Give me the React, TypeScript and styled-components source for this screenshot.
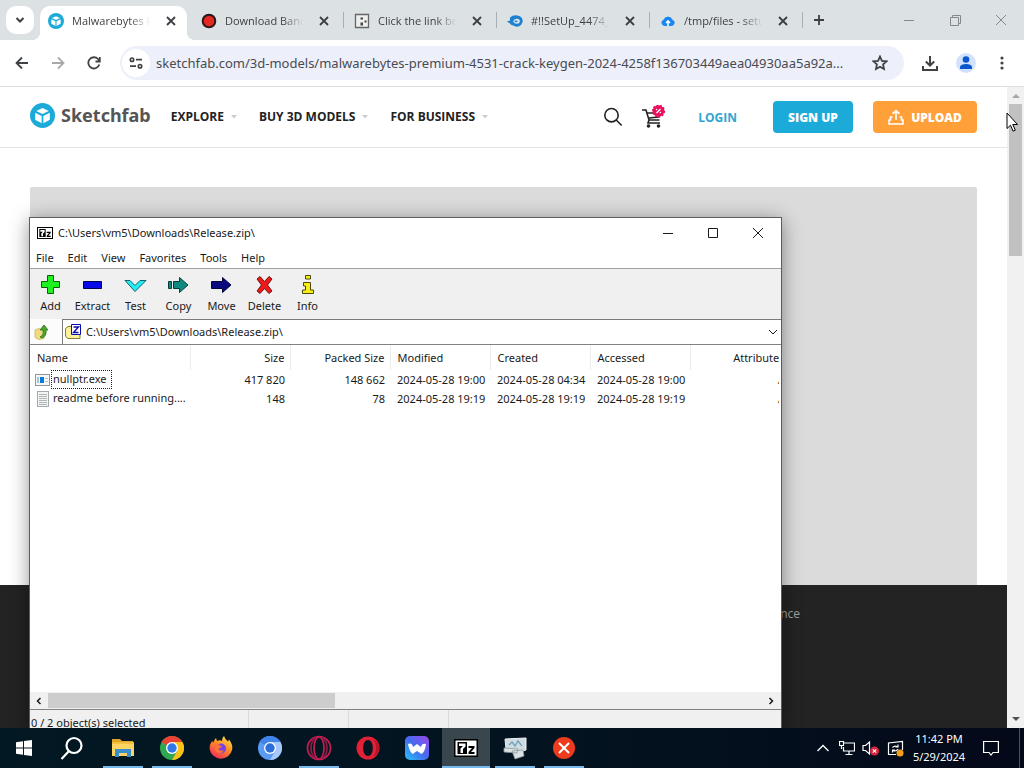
import React from "react";
import styled, { createGlobalStyle, css } from "styled-components";

const Global = createGlobalStyle`
  * { box-sizing: border-box; }
  body { margin: 0; font-family: "Open Sans", "Noto Sans", sans-serif; }
  button { border: 0; padding: 0; margin: 0; background: none; font: inherit; color: inherit; }
  a { color: inherit; text-decoration: none; }
  svg { display: block; flex: none; }
`;

const Desktop = styled.div`
  position: relative;
  display: flex;
  flex-direction: column;
  height: 100vh;
  overflow: hidden;
  background: #fff;
`;

/* ---------- browser ---------- */

const Browser = styled.div`
  flex: 1;
  min-height: 0;
  display: flex;
  flex-direction: column;
`;

const TabStrip = styled.div`
  display: flex;
  align-items: center;
  height: 40px;
  padding-left: 6px;
  background: #dce1e3;
  color: #3c3f42;
`;

const IconButton = styled.button<{ $w?: number; $h?: number; $muted?: boolean }>`
  display: flex;
  align-items: center;
  justify-content: center;
  flex: none;
  width: ${(p) => p.$w ?? 28}px;
  height: ${(p) => p.$h ?? 28}px;
  opacity: ${(p) => (p.$muted ? 0.45 : 1)};
`;

const TabSearch = styled(IconButton)`
  margin-right: 6px;
  border-radius: 10px;
  background: #fff;
`;

const Tab = styled.div<{ $active?: boolean }>`
  position: relative;
  display: flex;
  align-items: center;
  align-self: flex-end;
  flex: none;
  width: 147px;
  height: 34px;
  margin-right: 6px;
  padding: 0 6px 5px 8px;
  border-radius: 10px 10px 0 0;
  ${(p) =>
    p.$active
      ? css`
          background: #fff;
          &::before, &::after {
            content: "";
            position: absolute;
            bottom: 0;
            width: 8px;
            height: 8px;
          }
          &::before { left: -8px; background: radial-gradient(circle at 0 0, transparent 8px, #fff 8px); }
          &::after { right: -8px; background: radial-gradient(circle at 100% 0, transparent 8px, #fff 8px); }
        `
      : css`
          &::after {
            content: "";
            position: absolute;
            right: -4px;
            top: 6px;
            width: 1px;
            height: 16px;
            background: #a9b0b5;
          }
        `}
`;

const TabTitle = styled.span`
  flex: 1;
  min-width: 0;
  margin: 0 9px 0 8px;
  overflow: hidden;
  white-space: nowrap;
  font-size: 11px;
  line-height: 18px;
  mask-image: linear-gradient(to right, #000 72%, transparent 98%);
`;

const CaptionButtons = styled.div`
  display: flex;
  margin-left: auto;
  color: #85898c;
`;

const Toolbar = styled.div`
  display: flex;
  align-items: center;
  height: 47px;
  padding: 0 8px;
  gap: 8px;
  border-bottom: 1px solid #dcdfe1;
  background: #fff;
  color: #3f4346;
`;

const AddressBar = styled.label`
  display: flex;
  align-items: center;
  flex: 1;
  min-width: 0;
  height: 34px;
  margin: 0 -4px 0 4px;
  padding: 0 10px 0 2px;
  border-radius: 17px;
  background: #edf0fa;
`;

const SiteInfo = styled(IconButton)`
  border-radius: 50%;
  background: #fff;
`;

const UrlInput = styled.input`
  flex: 1;
  min-width: 0;
  margin-left: 6px;
  padding: 0;
  border: 0;
  outline: 0;
  background: none;
  color: #474b52;
  font: 13px/20px "Noto Sans", sans-serif;
  text-overflow: ellipsis;
`;

const ToolbarActions = styled.div`
  display: flex;
  margin: 0 -4px 0 4px;
`;

const Viewport = styled.div`
  flex: 1;
  min-height: 0;
  display: flex;
`;

const Page = styled.div`
  flex: 1;
  min-width: 0;
  display: flex;
  flex-direction: column;
  background: #fff;
`;

const SiteHeader = styled.header`
  display: flex;
  align-items: center;
  height: 61px;
  padding: 0 30px;
  border-bottom: 1px solid #e4e5e8;
`;

const Brand = styled.a`
  display: flex;
  align-items: center;
  gap: 6px;
  margin-right: 20px;
  padding-bottom: 4px;
  color: #555;
  font-family: "Noto Sans", sans-serif;
  font-size: 18px;
  font-weight: 700;
  line-height: 26px;
`;

const SiteNav = styled.nav`
  display: flex;
  gap: 22px;
`;

const NavItem = styled.a`
  display: flex;
  align-items: center;
  gap: 7px;
  color: #222;
  font-size: 12px;
  font-weight: 700;
  line-height: 18px;
`;

const HeaderActions = styled.div`
  display: flex;
  align-items: center;
  margin-left: auto;
  color: #222;
`;

const LoginLink = styled.a`
  margin: 0 16px 0 25px;
  color: #2ea6d0;
  font-size: 12px;
  font-weight: 700;
`;

const SiteButton = styled.button<{ $color: string; $w: number }>`
  display: flex;
  align-items: center;
  justify-content: center;
  gap: 7px;
  width: ${(p) => p.$w}px;
  height: 32px;
  margin-left: 20px;
  border-radius: 4px;
  background: ${(p) => p.$color};
  color: #fff;
  font-size: 12px;
  font-weight: 800;
`;

const Hero = styled.main`
  flex: 1;
  min-height: 0;
  padding: 39px 30px 0;
`;

const ModelViewer = styled.div`
  height: 100%;
  border-radius: 2px 2px 0 0;
  background: #dbdbdb;
`;

const SiteFooter = styled.footer`
  display: flex;
  justify-content: flex-end;
  height: 143px;
  padding: 20px 207px;
  background: #232323;
  color: #a2a2a2;
  font-size: 12px;
  line-height: 18px;
`;

const PageScrollbar = styled.div`
  display: flex;
  flex-direction: column;
  align-items: center;
  width: 17px;
  background: #f1f1f1;
`;

const ScrollThumb = styled.div`
  width: 13px;
  height: 152px;
  margin-bottom: auto;
  background: #c1c1c1;
`;

/* ---------- archive manager window ---------- */

const AppWindow = styled.section`
  position: absolute;
  left: 29px;
  top: 217px;
  display: flex;
  flex-direction: column;
  width: 753px;
  height: 517px;
  border: 1px solid #5c5c5c;
  background: #fff;
  color: #1a1a1a;
  font-family: "Noto Sans", sans-serif;
  font-size: 11px;
  line-height: 16px;
  box-shadow: 0 3px 18px rgba(0, 0, 0, 0.42);
`;

const TitleBar = styled.div`
  display: flex;
  align-items: center;
  height: 30px;
  padding-left: 7px;
`;

const WindowTitle = styled.span`
  margin: 0 auto 0 5px;
`;

const MenuBar = styled.div`
  display: flex;
  gap: 14px;
  height: 21px;
  padding: 2px 6px 0;
  border-bottom: 1px solid #a0a0a0;
`;

const MenuItem = styled.button`
  height: 16px;
  line-height: 16px;
`;

const ToolRow = styled.div`
  display: flex;
  height: 50px;
  background: #f0f0f0;
`;

const Tool = styled.button`
  display: flex;
  flex-direction: column;
  align-items: center;
  gap: 2px;
  width: 43px;
  padding-top: 5px;
  white-space: nowrap;
  &:first-child { width: 41px; }
`;

const PathRow = styled.div`
  display: flex;
  height: 26px;
  gap: 8px;
  background: #fcfcfc;
  border-bottom: 1px solid #828282;
`;

const PathBox = styled.label`
  display: flex;
  align-items: center;
  flex: 1;
  gap: 4px;
  padding: 0 2px;
  border: 1px solid #7a7a7a;
  border-width: 1px 0 0 1px;
  background: #fff;
`;

const PathInput = styled.input`
  flex: 1;
  padding: 0;
  border: 0;
  outline: 0;
  background: none;
  color: #1a1a1a;
  font: 11px/16px "Noto Sans", sans-serif;
`;

const ListArea = styled.div`
  flex: 1;
  min-height: 0;
  margin-right: 2px;
  overflow: hidden;
`;

const FileTable = styled.table`
  width: 760px;
  table-layout: fixed;
  border-collapse: collapse;
`;

const Col = styled.col<{ $w: number }>`
  width: ${(p) => p.$w}px;
`;

const Head = styled.th<{ $right?: boolean }>`
  height: 25px;
  padding: 0 5px 0 7px;
  border-right: 1px solid #ececec;
  font-weight: 400;
  text-align: ${(p) => (p.$right ? "right" : "left")};
`;

const Cell = styled.td<{ $right?: boolean }>`
  height: 19px;
  padding: 0 5px 0 7px;
  overflow: hidden;
  white-space: nowrap;
  text-align: ${(p) => (p.$right ? "right" : "left")};
  &:first-child { padding: 0 0 0 5px; }
`;

const FileName = styled.div`
  display: flex;
  align-items: center;
  gap: 1px;
`;

const FileLabel = styled.span<{ $focused?: boolean }>`
  height: 19px;
  padding: 0 4px 0 1px;
  border: 1px dotted ${(p) => (p.$focused ? "#222" : "transparent")};
`;

const HScroll = styled.div`
  display: flex;
  align-items: center;
  height: 17px;
  background: #f0f0f0;
`;

const HThumb = styled.div`
  width: 287px;
  height: 15px;
  margin-right: auto;
  background: #cdcdcd;
`;

const StatusBar = styled.div`
  display: flex;
  height: 24px;
  border-top: 1px solid #828282;
  background: #f0f0f0;
`;

const StatusPart = styled.div<{ $w: number }>`
  width: ${(p) => p.$w}px;
  padding: 5px 0 0 1px;
  border-right: 1px solid #dadada;
`;

/* ---------- taskbar ---------- */

const Taskbar = styled.div`
  position: relative;
  display: flex;
  align-items: stretch;
  height: 40px;
  padding-right: 4px;
  background: linear-gradient(to right, #021822, #03131f 55%, #04091a);
  color: #fff;
`;

const TaskButton = styled.button<{ $running?: boolean; $active?: boolean }>`
  display: flex;
  align-items: center;
  justify-content: center;
  width: 48px;
  margin-right: 1px;
  background-color: ${(p) => (p.$active ? "#3a464e" : "transparent")};
  ${(p) =>
    (p.$running || p.$active) &&
    css`
      background-image: linear-gradient(#76b9ed, #76b9ed);
      background-repeat: no-repeat;
      background-size: ${p.$active ? "48px" : "40px"} 2px;
      background-position: bottom center;
    `}
  &:nth-child(-n + 2) { margin-right: 0; }
  &:nth-child(2) { margin-right: 3px; }
`;

const Tray = styled.div`
  display: flex;
  align-items: center;
  margin-left: auto;
`;

const TrayButton = styled(IconButton)`
  height: 40px;
`;

const Clock = styled.time`
  width: 62px;
  margin: 0 7px 0 1px;
  font-family: "Noto Sans", sans-serif;
  font-size: 11px;
  line-height: 18px;
  text-align: center;
`;

const ShowDesktop = styled.button`
  width: 1px;
  height: 40px;
  margin-left: 14px;
  background: #4a5560;
`;

const Pointer = styled.svg`
  position: absolute;
  left: 1006px;
  top: 112px;
`;

/* ---------- icons ---------- */

const Stroke = ({ s = 16, w = 2, d }: { s?: number; w?: number; d: string }) => (
  <svg width={s} height={s} viewBox={`0 0 ${s} ${s}`} fill="none" stroke="currentColor" strokeWidth={w}>
    <path d={d} />
  </svg>
);

const CubeLogo = ({ size }: { size: number }) => (
  <svg width={size} height={size} viewBox="0 0 24 24">
    <circle cx="12" cy="12" r="12" fill="#1caad9" />
    <path d="M12 4.8 18 7.6 12 10.6 6 7.6ZM5 9.3l6.2 3.2v6.9L5 16ZM19 9.3l-6.2 3.2v6.9L19 16Z" fill="#fff" />
  </svg>
);

const RecordIcon = () => (
  <svg width="16" height="16" viewBox="0 0 16 16">
    <circle cx="8" cy="8" r="6.3" fill="#e32922" stroke="#291719" strokeWidth="2" />
  </svg>
);

const PuzzleIcon = () => (
  <svg width="16" height="16" viewBox="0 0 16 16">
    <path d="M1.5 1.500h13v13h-13Z" fill="#efefef" stroke="#666" strokeWidth="1.300" />
    <path d="M6.500 4.500H9v2H6.500ZM6.500 9.500H9v3H6.500ZM10.500 7.500h2v2h-2Z" fill="#444" />
  </svg>
);

const MediaFireIcon = () => (
  <svg width="16" height="16" viewBox="0 0 16 16">
    <path d="M3 4.500Q6 1.800 10 2.400a5.600 5.600 0 1 1-3 10.300Q4 12.500 3 10.500L0 8.500l3-1Z" fill="#1f7fd0" />
    <path d="M6 8.400q1-2.400 3.800-2.700 3 0 3 2.500-.1 2.500-3 2.500-2.500 0-3.800-2.300Z" fill="#dfeaf2" />
    <path d="M7.500 8.400h3" stroke="#1f7fd0" strokeWidth="1.500" fill="none" />
  </svg>
);

const CloudIcon = () => (
  <svg width="16" height="16" viewBox="0 0 16 16">
    <path d="M4.500 12.500a2.800 2.800 0 0 1-.5-5.500A4.200 4.200 0 0 1 12 7a2.800 2.800 0 0 1-.2 5.500Z" fill="#1786f2" stroke="#1786f2" />
    <path d="M8 13V8.500M6 10l2-2.200L10 10" stroke="#fff" strokeWidth="1.500" fill="none" />
  </svg>
);

const CloseIcon = () => <Stroke s={12} w={1.8} d="M2 2l8 8M10 2l-8 8" />;

const SearchIcon = () => <Stroke s={20} w={1.6} d="M8.500 1.500a6.700 6.700 0 1 0 0 13.400 6.700 6.700 0 0 0 0-13.400ZM13.200 13l5.500 5.500" />;

const CartIcon = () => (
  <svg width="24" height="24" viewBox="0 0 24 24" fill="none" stroke="#222" strokeWidth="1.600">
    <path d="M1 5h4l3 10h10.500M6.500 8h12l-1 4-9.500 1M8 15l-1 3h12" />
    <circle cx="7.500" cy="21" r="1" fill="#222" />
    <circle cx="17.500" cy="21" r="1" fill="#222" />
    <circle cx="17.500" cy="6" r="5.800" fill="#e8115f" stroke="#e8115f" strokeDasharray="2 1.500" />
    <path d="M15.500 8l4-4" stroke="#fff" strokeWidth="1.200" />
    <circle cx="15.600" cy="4.500" r=".8" fill="#fff" stroke="none" />
    <circle cx="19.400" cy="7.500" r=".8" fill="#fff" stroke="none" />
  </svg>
);

const SevenZip = ({ w, h }: { w: number; h: number }) => (
  <svg width={w} height={h} viewBox="0 0 24 18" preserveAspectRatio="none">
    <path d="M0 0h24v18H0Z" fill="#000" />
    <path d="M1.500 1.500h21v15h-21Z" fill="#fff" />
    <path d="M3.500 3h9.500v12H3.500Z" fill="#000" />
    <path d="M5 4.500h6.500v3L9 10v4H6.500v-4.500L9 7H5Z" fill="#fff" />
    <path d="M14.500 7h6v2l-3.500 4h3.500v2h-6v-2l3.500-4h-3.500Z" fill="#000" />
  </svg>
);

const toolShapes: Record<string, React.ReactNode> = {
  Add: <path d="M8.500 1.500h6v6h6v6h-6v6h-6v-6h-6v-6h6Z" fill="#1ff01f" stroke="#0a5c0a" />,
  Extract: <path d="M2.500 7.500h18v7h-18Z" fill="#0808e8" stroke="#000050" />,
  Test: <path d="M1 6.500h5l5 5 5-5h6l-11 11Z" fill="#22eef2" stroke="#126070" />,
  Copy: <path d="M1.500 7.500h3v7h-3ZM6.500 7.500h6v-4l8.500 7.500-8.500 7.500v-4h-6Z" fill="#108a80" stroke="#043c38" />,
  Move: <path d="M1.500 7.500h11v-4l8.500 7.500-8.500 7.500v-4h-11Z" fill="#0a0a80" stroke="#04043c" />,
  Delete: <path d="M4 5l3-2.500 4.500 5 4.500-5L19 5l-4.500 6 4.500 6-3 2.500-4.500-5-4.500 5L4 17l4.500-6Z" fill="#f01818" stroke="#701010" />,
  Info: <path d="M9.500 1.500h5v3.500h-5ZM7.500 8.500h7v7.500h3v3.500h-11v-3.500h3v-4h-2Z" fill="#f7ee18" stroke="#4c4a08" />,
};

const ToolIcon = ({ name }: { name: string }) => (
  <svg width="23" height="22" viewBox="0 0 23 22">{toolShapes[name]}</svg>
);

const UpFolder = () => (
  <svg width="16" height="16" viewBox="0 0 16 16">
    <path d="M1 6l4-1.500L10 7v7.500L5 15.500 1 13.500Z" fill="#f0dc80" stroke="#cdb35c" strokeWidth=".8" />
    <path d="M6 13q4-1.500 3-7H6l4-5 4 5h-2q1 6-4 8Z" fill="#4aa52c" stroke="#2a7418" strokeWidth=".8" />
  </svg>
);

const ZipFolder = () => (
  <svg width="17" height="16" viewBox="0 0 17 16">
    <path d="M.5 4.500 3 2.500h4l1 2h7v10H2.500L.5 12Z" fill="#fbf19a" stroke="#857a28" />
    <path d="M6.500.5h9v10h-9Z" fill="#fff" stroke="#0c0cae" />
    <path d="M8.500 3h5l-5 5.500h5" fill="none" stroke="#0c0cae" strokeWidth="1.400" />
  </svg>
);

const ExeIcon = () => (
  <svg width="15" height="12" viewBox="0 0 15 12" shapeRendering="crispEdges">
    <path d="M.5.500h14v11H.5Z" fill="#f7f7f7" stroke="#8f979e" />
    <path d="M5 3h4v6H5Z" fill="#0b7bd6" />
    <path d="M2 3h2v6H2ZM10 4h3v1h-3ZM10 7h3v1h-3Z" fill="#9fc6de" />
  </svg>
);

const TextFileIcon = () => (
  <svg width="15" height="16" viewBox="0 0 15 16" shapeRendering="crispEdges">
    <path d="M2.500.500h11v15h-11Z" fill="#f4f4f4" stroke="#a3a9ac" />
    <path d="M4 3.500h8M4 5.500h8M4 7.500h8M4 9.500h8M4 11.500h8M4 13.500h8" stroke="#b0b6b8" />
  </svg>
);

const ChromeMark = ({ a, b, c, core }: { a: string; b: string; c: string; core: string }) => (
  <svg width="24" height="24" viewBox="0 0 24 24">
    <circle cx="12" cy="12" r="12" fill={b} />
    <path d="M12 12 1.600 6A12 12 0 0 1 22.400 6H12Z" fill={a} />
    <path d="M12 6h10.400A12 12 0 0 1 12 24l5.200-9Z" fill={c} />
    <circle cx="12" cy="12" r="6" fill="#fff" />
    <circle cx="12" cy="12" r="4.700" fill={core} />
  </svg>
);

const FirefoxIcon = () => (
  <svg width="24" height="24" viewBox="0 0 24 24">
    <defs>
      <linearGradient id="fx" x1=".8" y1="0" x2=".2" y2="1">
        <stop offset="0" stopColor="#ffe14a" />
        <stop offset=".45" stopColor="#ff8a25" />
        <stop offset="1" stopColor="#f0265d" />
      </linearGradient>
    </defs>
    <path d="M3 5l1.500 1.500Q5 3.500 7 2l1 3q3-1.500 5 0 0-3.500 2-5 1 3.500 4 5.500l1-2q4 5 3.200 10A11.500 11.500 0 0 1 .6 13Q.5 8 3 5Z" fill="url(#fx)" />
    <circle cx="12" cy="12.500" r="5" fill="#7542e5" />
    <path d="M5 9q4-2 6 .5 2.500.5 1.500 2-2.500 0-3 2 2 2 5 .5-1 4-5 3-4.500-1.500-4.500-8Z" fill="#ff7139" />
  </svg>
);

const OperaIcon = ({ gx }: { gx?: boolean }) =>
  gx ? (
    <svg width="26" height="26" viewBox="0 0 26 26" fill="none" stroke="#c61d50" strokeWidth="1.700">
      <circle cx="13" cy="13" r="11.500" />
      <ellipse cx="13" cy="13" rx="5" ry="11" />
      <path d="M10 2.500q-5 3-5 10.500t5 10.500M16 2.500q5 3 5 10.500t-5 10.500" stroke="#8d1b48" />
    </svg>
  ) : (
    <svg width="24" height="24" viewBox="0 0 24 24">
      <path fillRule="evenodd" d="M12 .5a11.500 11.500 0 1 0 0 23 11.500 11.500 0 0 0 0-23ZM12 4c3 0 4.800 3.500 4.800 8S15 20 12 20s-4.800-3.500-4.800-8S9 4 12 4Z" fill="#e02136" />
      <path d="M17 3q6 3 6 9t-6 9q3-3 3-9t-3-9Z" fill="#b81428" />
    </svg>
  );

const WaveIcon = () => (
  <svg width="24" height="24" viewBox="0 0 24 24">
    <defs>
      <linearGradient id="wb" x1="0" y1="1" x2="1" y2="0">
        <stop offset="0" stopColor="#27c3f5" />
        <stop offset=".5" stopColor="#456cf0" />
        <stop offset="1" stopColor="#9a45ea" />
      </linearGradient>
    </defs>
    <rect width="24" height="24" rx="5" fill="url(#wb)" />
    <path d="M3 8q4-2 5 3l4-3 4 3q1-4.500 5-3-1 8-4.500 10L12 15l-4.500 3Q4 15 3 8Z" fill="#fff" />
  </svg>
);

const ExplorerIcon = () => (
  <svg width="24" height="22" viewBox="0 0 24 22">
    <path d="M1 2h8l2 2h11v15H1Z" fill="#e0a42a" />
    <path d="M1 6h22v13H1Z" fill="#fbd463" />
    <path d="M4 12h16v8h-4v-4H8v4H4Z" fill="#3a8ecb" />
    <path d="M1 5h22v2H1Z" fill="#f4c13f" />
  </svg>
);

const ServerIcon = () => (
  <svg width="24" height="24" viewBox="0 0 24 24">
    <path d="M2 3l21-1v12l-6 2-14-3Z" fill="#cfdbe1" stroke="#eef2f4" />
    <path d="M6 9l3-3 3 4 3-5 4 5" fill="none" stroke="#6fa3bb" strokeWidth="1.300" />
    <path d="M1 12l14 1-1 4-13-1ZM9 15l11-1 1 6-9 3Z" fill="#dbe1e4" stroke="#8d999f" strokeWidth=".8" />
  </svg>
);

/* ---------- data ---------- */

const tabs = [
  { title: "Malwarebytes Premium", icon: <CubeLogo size={16} />, active: true },
  { title: "Download Bandicam", icon: <RecordIcon /> },
  { title: "Click the link below", icon: <PuzzleIcon /> },
  { title: "#!!SetUp_4474_Pass", icon: <MediaFireIcon /> },
  { title: "/tmp/files - setup", icon: <CloudIcon /> },
];

const files = [
  { name: "nullptr.exe", size: "417 820", packed: "148 662", times: ["2024-05-28 19:00", "2024-05-28 04:34", "2024-05-28 19:00"], icon: <ExeIcon />, focused: true },
  { name: "readme before running....", size: "148", packed: "78", times: ["2024-05-28 19:19", "2024-05-28 19:19", "2024-05-28 19:19"], icon: <TextFileIcon /> },
];

const apps = [
  { label: "File Explorer", icon: <ExplorerIcon />, running: true },
  { label: "Chrome", icon: <ChromeMark a="#ea4335" b="#2fa84f" c="#fbc116" core="#2f78ea" />, running: true },
  { label: "Firefox", icon: <FirefoxIcon /> },
  { label: "Chromium", icon: <ChromeMark a="#3f84ea" b="#5b9bf3" c="#a6c8fa" core="#2c6fd8" /> },
  { label: "Opera GX", icon: <OperaIcon gx />, running: true },
  { label: "Opera", icon: <OperaIcon /> },
  { label: "Wave Browser", icon: <WaveIcon /> },
  { label: "7-Zip", icon: <SevenZip w={24} h={18} />, active: true },
  { label: "Process monitor", icon: <ServerIcon />, running: true },
  {
    label: "Stop",
    icon: (
      <svg width="22" height="22" viewBox="0 0 22 22">
        <circle cx="11" cy="11" r="11" fill="#ee3a1f" />
        <path d="M6 6l10 10M16 6 6 16" stroke="#fff" strokeWidth="2" />
      </svg>
    ),
    running: true,
  },
];

export default function App() {
  return (
    <Desktop>
      <Global />
      <Browser>
        <TabStrip>
          <TabSearch aria-label="Search tabs"><Stroke s={10} d="M1.500 3 5 6.500 8.500 3" /></TabSearch>
          {tabs.map((t) => (
            <Tab key={t.title} $active={t.active}>
              {t.icon}
              <TabTitle>{t.title}</TabTitle>
              <IconButton $w={20} $h={20} aria-label="Close tab"><CloseIcon /></IconButton>
            </Tab>
          ))}
          <IconButton aria-label="New tab"><Stroke s={12} w={1.8} d="M6 1v10M1 6h10" /></IconButton>
          <CaptionButtons>
            <IconButton $w={46} aria-label="Minimize"><Stroke s={10} w={1} d="M0 5.500h10" /></IconButton>
            <IconButton $w={46} aria-label="Restore"><Stroke s={11} w={1} d="M.5 2.500h8v8h-8ZM2.500 2.500v-2h8v8h-2" /></IconButton>
            <IconButton $w={46} aria-label="Close"><Stroke s={12} w={1} d="M1 1l10 10M11 1 1 11" /></IconButton>
          </CaptionButtons>
        </TabStrip>
        <Toolbar>
          <IconButton aria-label="Back"><Stroke s={14} w={1.8} d="M13 7H2M7 1.500 1.500 7 7 12.500" /></IconButton>
          <IconButton aria-label="Forward" $muted><Stroke s={14} w={1.8} d="M1 7h11M7 1.500 12.500 7 7 12.500" /></IconButton>
          <IconButton aria-label="Reload">
            <Stroke s={14} w={1.8} d="M12.300 8.500A5.600 5.600 0 1 1 11 3l1.500 1.800M12.800 1v4.500H8.500" />
          </IconButton>
          <AddressBar>
            <SiteInfo aria-label="Site information">
              <svg width="14" height="12" viewBox="0 0 14 12" fill="none" stroke="currentColor" strokeWidth="1.700">
                <circle cx="3" cy="2.700" r="1.700" /><path d="M7 2.700h6M1 9.200h6" /><circle cx="11" cy="9.200" r="1.700" />
              </svg>
            </SiteInfo>
            <UrlInput aria-label="Address" readOnly value="sketchfab.com/3d-models/malwarebytes-premium-4531-crack-keygen-2024-4258f136703449aea04930aa5a92a..." />
            <IconButton aria-label="Bookmark">
              <Stroke s={16} w={1.8} d="M8 1.500l1.900 4.300 4.600.5-3.400 3.100.9 4.600-4-2.300L4 14l.9-4.600L1.500 6.300l4.600-.5Z" />
            </IconButton>
          </AddressBar>
          <ToolbarActions>
            <IconButton $w={36} aria-label="Downloads"><Stroke s={16} d="M8 1v9M3.800 6.500 8 10.500l4.200-4M1 11v4h14v-4" /></IconButton>
            <IconButton $w={36} aria-label="Profile">
              <svg width="20" height="20" viewBox="0 0 20 20"><circle cx="10" cy="10" r="10" fill="#d3e2fc" /><circle cx="10" cy="6.500" r="3.300" fill="#0b57d0" /><path d="M4 16v-2.500q1-2.500 6-2.500t6 2.500V16Z" fill="#0b57d0" /></svg>
            </IconButton>
            <IconButton $w={36} aria-label="Menu">
              <svg width="4" height="16" fill="currentColor"><circle cx="2" cy="3" r="1.600" /><circle cx="2" cy="8" r="1.600" /><circle cx="2" cy="13" r="1.600" /></svg>
            </IconButton>
          </ToolbarActions>
        </Toolbar>
        <Viewport>
          <Page>
            <SiteHeader>
              <Brand href="#"><CubeLogo size={25} />Sketchfab</Brand>
              <SiteNav>
                {["EXPLORE", "BUY 3D MODELS", "FOR BUSINESS"].map((n) => (
                  <NavItem href="#" key={n}>{n}<svg width="6" height="4"><path d="M0 0h6L3 3.500Z" fill="#ccc" /></svg></NavItem>
                ))}
              </SiteNav>
              <HeaderActions>
                <IconButton $w={40} aria-label="Search"><SearchIcon /></IconButton>
                <IconButton $w={40} aria-label="Store"><CartIcon /></IconButton>
                <LoginLink href="#">LOGIN</LoginLink>
                <SiteButton $color="#1caad9" $w={80}>SIGN UP</SiteButton>
                <SiteButton $color="#ffa039" $w={104}>
                  <Stroke s={16} w={1.6} d="M8 11V1.500M4.500 4.800 8 1.500l3.500 3.300M4.500 8H2.500v3H1v4h14v-4h-1.500V8h-2" />UPLOAD
                </SiteButton>
              </HeaderActions>
            </SiteHeader>
            <Hero><ModelViewer /></Hero>
            <SiteFooter>nce</SiteFooter>
          </Page>
          <PageScrollbar>
            <IconButton $w={17} $h={17} aria-label="Scroll up"><svg width="8" height="5"><path d="M0 5 4 1l4 4Z" fill="#a3a3a3" /></svg></IconButton>
            <ScrollThumb />
            <IconButton $w={17} $h={17} aria-label="Scroll down"><svg width="8" height="5"><path d="M0 0h8L4 4Z" fill="#505050" /></svg></IconButton>
          </PageScrollbar>
        </Viewport>
      </Browser>

      <AppWindow>
        <TitleBar>
          <SevenZip w={16} h={12} />
          <WindowTitle>C:\Users\vm5\Downloads\Release.zip\</WindowTitle>
          <IconButton $w={45} aria-label="Minimize"><Stroke s={10} w={1} d="M0 5.500h10" /></IconButton>
          <IconButton $w={45} aria-label="Maximize"><Stroke s={10} w={1} d="M.5.500h9v9h-9Z" /></IconButton>
          <IconButton $w={46} aria-label="Close"><Stroke s={10} w={1} d="M0 0l10 10M10 0 0 10" /></IconButton>
        </TitleBar>
        <MenuBar>
          {["File", "Edit", "View", "Favorites", "Tools", "Help"].map((m) => <MenuItem key={m}>{m}</MenuItem>)}
        </MenuBar>
        <ToolRow>
          {Object.keys(toolShapes).map((t) => <Tool key={t}><ToolIcon name={t} />{t}</Tool>)}
        </ToolRow>
        <PathRow>
          <IconButton $w={24} $h={25} aria-label="Up one level"><UpFolder /></IconButton>
          <PathBox>
            <ZipFolder />
            <PathInput aria-label="Path" readOnly value="C:\Users\vm5\Downloads\Release.zip\" />
            <Stroke s={12} w={1} d="M2 4l4 4 4-4" />
          </PathBox>
        </PathRow>
        <ListArea>
          <FileTable>
            <colgroup>{[160, 100, 100, 100, 100, 100, 100].map((w, i) => <Col key={i} $w={w} />)}</colgroup>
            <thead>
              <tr>
                <Head>Name</Head><Head $right>Size</Head><Head $right>Packed Size</Head>
                <Head>Modified</Head><Head>Created</Head><Head>Accessed</Head><Head $right>Attributes</Head>
              </tr>
            </thead>
            <tbody>
              {files.map((f) => (
                <tr key={f.name}>
                  <Cell><FileName>{f.icon}<FileLabel $focused={f.focused}>{f.name}</FileLabel></FileName></Cell>
                  <Cell $right>{f.size}</Cell>
                  <Cell $right>{f.packed}</Cell>
                  {f.times.map((t, i) => <Cell key={i}>{t}</Cell>)}
                  <Cell $right>A</Cell>
                </tr>
              ))}
            </tbody>
          </FileTable>
        </ListArea>
        <HScroll>
          <IconButton $w={18} $h={17} aria-label="Scroll left"><Stroke s={8} w={1.5} d="M5.500 1l-3 3 3 3" /></IconButton>
          <HThumb />
          <IconButton $w={20} $h={17} aria-label="Scroll right"><Stroke s={8} w={1.5} d="M2.500 1l3 3-3 3" /></IconButton>
        </HScroll>
        <StatusBar>
          <StatusPart $w={219}>0 / 2 object(s) selected</StatusPart>
          <StatusPart $w={100} /><StatusPart $w={100} />
        </StatusBar>
      </AppWindow>

      <Taskbar>
        <TaskButton aria-label="Start">
          <svg width="16" height="16" fill="#fff"><path d="M0 2.300 7 1.200V7.500H0ZM8 1l8-1v7.500H8ZM0 8.500h7v6.300L0 13.700ZM8 8.500h8V16l-8-1Z" /></svg>
        </TaskButton>
        <TaskButton aria-label="Search">
          <svg width="24" height="24" fill="none" stroke="#fff" strokeWidth="2.200"><circle cx="14" cy="9.500" r="7.500" /><path d="M9 15l-7.500 8" /></svg>
        </TaskButton>
        {apps.map((a) => (
          <TaskButton key={a.label} aria-label={a.label} $running={a.running} $active={a.active}>{a.icon}</TaskButton>
        ))}
        <Tray>
          <TrayButton $w={24} aria-label="Show hidden icons"><Stroke s={12} w={1.3} d="M.5 9 6 3.500 11.500 9" /></TrayButton>
          <TrayButton $w={24} aria-label="Network"><Stroke s={16} w={1.2} d="M4 3h11.500v8H4.500V7M.5 1.500h4v4h-4ZM2.500 5.500V9M10 11v3M6.500 14.500h7" /></TrayButton>
          <TrayButton $w={24} aria-label="Volume">
            <svg width="18" height="16" fill="none" stroke="#fff" strokeWidth="1.200"><path d="M1 5.500h2.500L7.500 2v12l-4-3.500H1Z" /><circle cx="12.500" cy="11" r="4.500" fill="#d8233c" stroke="none" /><path d="M10.800 9.300l3.400 3.400M14.200 9.300l-3.400 3.400" /></svg>
          </TrayButton>
          <TrayButton $w={24} aria-label="Updates">
            <svg width="17" height="17" fill="none" stroke="#fff" strokeWidth="1.200"><path d="M9 14.500H1.500V3L15.500 1.500V10M5.500 7.500q2.500-2.500 5-.5M11 4.500V7H8.500M11 9q-2 3-5 1.500M5.500 12.500V10H8" /><circle cx="13" cy="13" r="3.500" fill="#f5a01c" stroke="none" /></svg>
          </TrayButton>
          <Clock>11:42 PM<br />5/29/2024</Clock>
          <TrayButton $w={28} aria-label="Notifications"><Stroke s={16} w={1.2} d="M.6 1.500h14.800v11H10l-2 2.500-2-2.500H.6Z" /></TrayButton>
          <ShowDesktop aria-label="Show desktop" />
        </Tray>
      </Taskbar>
      <Pointer width="12" height="20" viewBox="0 0 12 20">
        <path d="M1 1v15.500l3.500-3.300 2.600 6 2.200-1-2.500-5.700h4.700Z" fill="#fff" stroke="#000" />
      </Pointer>
    </Desktop>
  );
}
